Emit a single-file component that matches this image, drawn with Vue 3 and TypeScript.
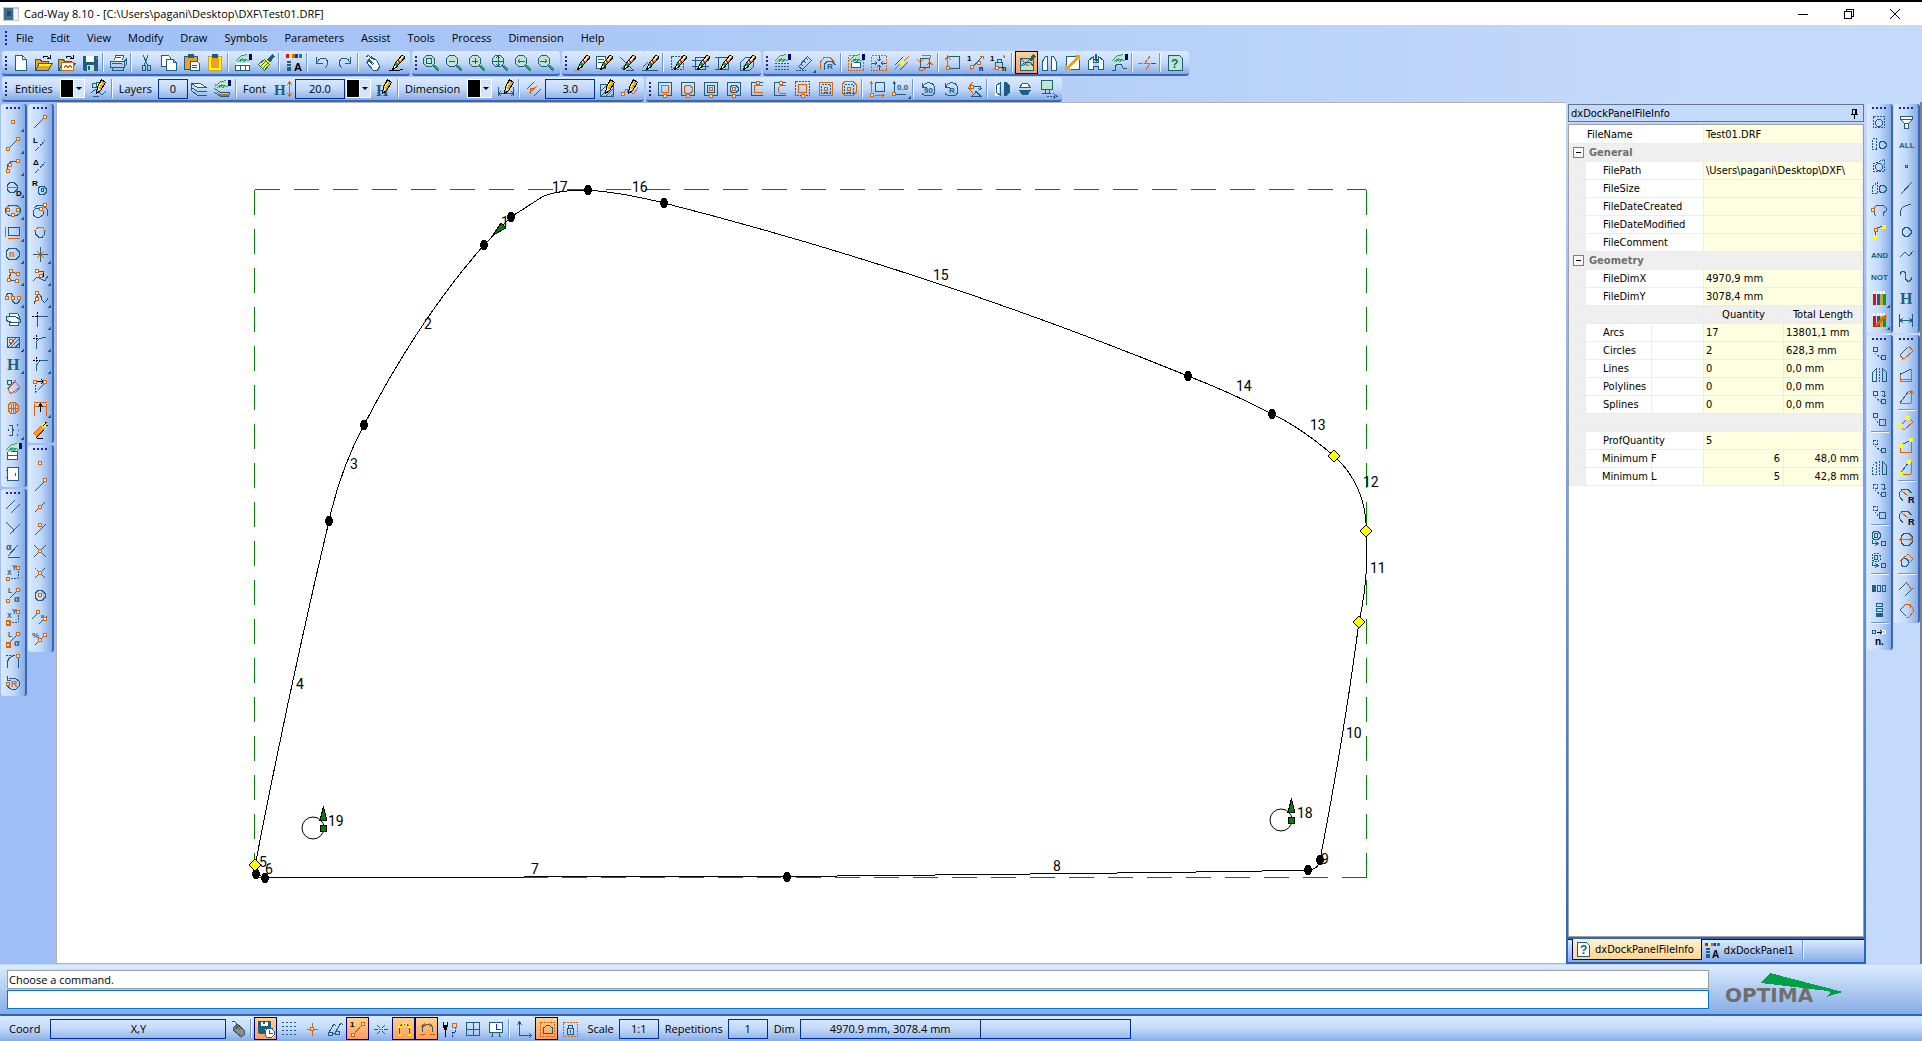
<script setup lang="ts">
import { h, ref } from 'vue'
import type { FunctionalComponent } from 'vue'

/*
 * Icons are written as short part lists on a 20 x 20 grid, parts split by ";".
 *   t M..   stroke in a palette colour      T M..   fill in that colour
 *   dt M..  dotted stroke                   n x y.. square handles
 *   v x y.. yellow handles                  # / $   bold sans / bold serif text: colour x y size text
 */
const palette: Record<string, string> = {
  t: '#1c5f80', o: '#e06200', k: '#000000', r: '#e01010', g: '#00a020', y: '#ffff00', w: '#ffffff',
  s: '#8c8c8c', b: '#00007c', a: '#f0a020', m: '#bfe6cc', l: '#2f9c7c', u: '#1028ff', e: '#d0a040'
}

const Glyph: FunctionalComponent<{ art: string }> = (props) =>
  h('svg', { width: 20, height: 20, viewBox: '0 0 20 20', 'aria-hidden': 'true' },
    props.art.split(';').map((part) => {
      const [code, ...rest] = part.trim().split(' ')
      if (code[0] === '#' || code[0] === '$') {
        return h('text', {
          x: rest[0], y: rest[1], 'font-size': rest[2], 'font-weight': 700, fill: palette[code[1]],
          'font-family': code[0] === '$' ? '"Liberation Serif", serif' : '"Liberation Sans", sans-serif'
        }, rest[3])
      }
      if (code === 'n' || code === 'v') {
        let d = ''
        for (let i = 0; i < rest.length; i += 2) d += `M${+rest[i] - 1.5} ${+rest[i + 1] - 1.5}h3v3h-3z`
        return code === 'n'
          ? h('path', { d, fill: '#fff4e4', stroke: palette.o })
          : h('path', { d, fill: palette.y, stroke: palette.y })
      }
      const dotted = code.length === 2
      const ink = dotted ? code[1] : code
      const filled = ink === ink.toUpperCase()
      const color = palette[ink.toLowerCase()]
      return h('path', {
        d: rest.join(' '), fill: filled ? color : 'none', stroke: filled ? 'none' : color,
        'stroke-dasharray': dotted ? '2 1' : undefined
      })
    }))
Glyph.props = ['art']

interface Tool { label: string; art: string; on?: boolean }
type Item = Tool | null
const tool = (label: string, art: string, on = false): Tool => ({ label, art, on })

const ToolKey: FunctionalComponent<{ item: Item }> = (props) =>
  props.item
    ? h('button', { type: 'button', class: ['key', { on: props.item.on }], 'aria-label': props.item.label }, [h(Glyph, { art: props.item.art })])
    : h('span', { class: 'sep' })
ToolKey.props = ['item']

const MORE = ';T M21 16v4h-4z'
const BRUSH = ';A M15 2h3v3l-7 8-3 3v-5z;k M15 2.500h2M18.500 3v2l-8 9-4 3M15.500 2.500l-7 9-2 5.500;W M15 4l1-1 1 1-6 7-1-1z;R M12 7l2 2-1 1-2-2z;G M10 9l2 2-2 2-1-2z;W M8 15l1-3 1 2z'
const PENCIL = ';A M13 1l4 3-5 7-3 3 1-6z;k M13.500 .5l4 3-5 8-4 3 1-6z;Y M13 3l1 1-3 5-1-1z;W M10 9l2 1-2 2z'
const HAND = ';M M4 5l5-3h7v6l-4 1-8 1z;l M3 8l5-5 6-1.500M5 9l5-4M7 9l4-3 5 1.500M10 9l3-2;B M16 1h3v6h-3z'
const LENS = 'M M6 3h5l2 2v5l-2 3H6l-3-3V6z;t M5.500 2.500h5l3 3v5l-3 3h-5l-3-3v-5z;L M12 12l2 0 4 4v2h-2l-4-4z;t M12 13l5 5'
const FOLDER = 'A M2 7h5l2 2h6v2h4l-4 7H2z;Y M5 11h12l-1 2H4z;t M1.500 17.500v-11h5l1 2h7v2M2 17.500l3-7h13l-4 7z;k M9 4.500q3-3 6 0M16 2v3h-3'

const fileTools: Item[] = [
  tool('New', 'W M5 2h7l4 4v12H5z;t M4.500 2.500h7l4 4v11h-11zM11.500 2.500v4h4'),
  tool('Open', FOLDER),
  tool('Import', FOLDER + ';W M4 9h13v9H4z;o M4.500 9.500h12v8h-12zM7 15l2-3 2 3 2-3 2 3'),
  tool('Save', 'T M3 3h15v15H4l-1-1z;W M6 3h8v6H6z;M M7 12h7v6H7z;T M8 13h2v4h-2z;S M16 4h1v2h-1z'),
  null,
  tool('Print', 'W M6 2h9v6H6z;t M6.500 7.500l1-5h8l-1 5M2.500 8.500h14v6h-14zM4.500 14.500v3h11v-3M4 10.500h10;t M16.500 8l2-2v5l-2 3M8 4.500h5;E M13 11h2v1h-2z'),
  null,
  tool('Cut', 't M7 2l5 11M12 2L8 13M6.500 12.500h3v5h-3zM11.500 12.500h3v5h-3z'),
  tool('Copy', 'W M2 2h8l2 2v9H2z;t M2.500 2.500h7l2 2v9h-9z;W M8 7h8l2 2v9H8z;t M7.500 6.500h7l3 3v8h-10zM14.500 6.500v3h3'),
  tool('Paste', 'A M3 3h13v14H3z;t M2.500 3.500h13v13h-13z;T M6 1h6v4H6z;W M9 8h9v10H9z;t M8.500 8.500h7l2 2v7h-9zM10 12.500h5M10 14.500h5'),
  tool('Clipboard', 'Y M4 4h12v13H4z;e M3.500 3.500h13v14h-13z;A M6 5h8v10H6z;T M7 1h6v4H7z'),
  null,
  tool('Entity properties', 'W M3 10h14v8H3z;t M2.500 12.500h14v5h-14zM7 13v4M12 13v4' + HAND),
  tool('Match format', 'Y M3 11l6-5 5 5-6 6z;t M2.500 11.500l6-5 5 5-5 6zM4 14l6-6M6 16l6-6;T M11 7l5-6 3 2-5 7z'),
  null,
  tool('Layers by colour', 'R M2 1h3v4H2z;Y M5 1h3v4H5z;O M8 1h3v4H8z;U M11 1h3v4h-3z;G M15 1h3v4h-3z;T M3 8h4v2H3zM3 11h4v2H3zM3 14h4v4H3z;#k 10 18 11 A'),
  null,
  tool('Undo', 't M4.500 4v6h6M5 9q4-6 9-3 4 4-1 9'),
  tool('Redo', 't M15.500 4v6h-6M15 9q-4-6-9-3-4 4 1 9'),
  null,
  tool('Pan', 'W M4 3l7 2 5 6v5l-4 2-4-3-5-5 2-2z;t M3.500 3.500l2-1 6 5M5 6l6 5M3.500 9.500l3-1 4 4M8.500 3.500l6 5 2 5-2 4h-4l-7-8z'),
  tool('Redraw', 'k M3 17.500h8l6-1' + BRUSH)
]
const zoomTools: Item[] = [
  tool('Zoom window', LENS + ';t M5.500 5.500h5v5h-5z'),
  tool('Zoom out', LENS + ';t M5 8.500h6'),
  tool('Zoom in', LENS + ';t M5 8.500h6M8.500 5v6'),
  tool('Zoom all', LENS + ';t M3 8.500h10M8.500 3v10M6 5l2-2 2 2M6 11l2 2 2-2'),
  tool('Zoom previous', LENS + ';t M5 8.500h7M7 6L5 8l2 2'),
  tool('Zoom next', LENS + ';t M4 8.500h7M9 6l2 2-2 2')
]
const eraseTools: Item[] = [
  tool('Erase entity', 's M3 17.500h8' + BRUSH),
  tool('Erase list', 'W M3 3h9v12H3z;t M2.500 3.500h9v12h-9zM4 6.500h6M4 9.500h5' + BRUSH),
  tool('Erase crossing', 't M3 4l13 13M9 17h8M4 16l4-4' + BRUSH),
  tool('Erase segment', 't M2 17.500h16M3 14l5-5' + BRUSH),
  null,
  tool('Erase inside', 'dt M3.500 3.500h12v13h-12z;t M4 17L15 6' + BRUSH),
  tool('Trim inside', 't M4.500 4.500h10v12h-10zM1 7.500h17M1 13.500h17' + BRUSH),
  tool('Trim window', 't M4.500 4.500h10v12h-10zM1 4.500h17M1 16.500h6' + BRUSH),
  tool('Erase profile', 't M3.500 9.500l5-5h6l2 3v6l-4 4h-9zM6 14l7-7' + BRUSH)
]
const assistTools: Item[] = [
  tool('Grid properties', 'dt M3 10.500h14M3 13.500h14M3 16.500h14' + HAND),
  tool('Measure', 't M3.500 13.500l9-10 4 4-9 9zM6 11l2 2M9 8l2 2M11 5l2 2;dt M1 17h10' + MORE),
  tool('Radius', 'o M2.500 16V9l4-5h5l5 5;t M6.500 17v-6l3-3h4l4 4;#t 9 16 8 R'),
  null,
  tool('Window selection', 'do M2.500 2.500h15v15h-15z;W M5 9h10v6H5z;t M5.500 9.500h9v5h-9z' + HAND),
  tool('Fit selection', 'do M2.500 2.500h15v15h-15z;t M10 3v5M10 17v-5M3 10h5M17 10h-5M8 6l2 2 2-2M8 14l2-2 2 2M6 8l2 2-2 2M14 8l-2 2 2 2'),
  tool('Split', 't M3 12l8-8M8 17l8-8;v 10 10;o M2 17l6-6M12 8l5-5'),
  tool('Rotate order', 't M5.500 5.500h9v9h-9z;o M2 6l3.500 3.500L9 6M7 2h8v3M11 15l-3 2H4v-3M12 12l2.500-3 3 3'),
  null,
  tool('Start point', 't M4.500 3.500h12v12h-12z;o M2 7l2.500-4L8 7M4.500 4v9;n 5 15'),
  tool('Number order', 't M8 12L17 3;o M4 17l10-10M14 3h3v3;n 6 14 13 10;#k 1 8 8 1;#k 13 18 7 n'),
  tool('Number lock', 't M6.500 9.500h7v5h-7zM8 9V6h4v3;o M14 2l2 3M4 17l4-3;n 8 15;#k 1 8 8 1;#k 13 18 7 n'),
  null,
  tool('Fill drawing', 't M3.500 5.500h13v12h-13zM4 6l8 8M5 14l8-8;T M12 7l4-6 3 2-5 6z;M M4 13h12v4H4z;t M3.500 13.500l4-4h6l3 4v4h-13z', true),
  tool('Mirror view', 'W M3 8l4-5v14H3zM16 8l-4-5v14h4z;t M2.500 8.500l3-5h2v14h-5zM16.500 8.500l-3-5h-2v14h5z'),
  tool('Diagonal', 'W M4 4h12v12H4z;t M3.500 3.500h13v13h-13z;A M11 2h6v6l-2-2-9 9 2 2H2v-6l2 2 9-9z;W M5 5h6l-6 6zM15 9v6H9z'),
  tool('Clamp', 'W M3 7l4-4v14H3zM17 7l-4-4v14h4z;t M2.500 16.500v-9l5-4v6h5v-6l5 4v9h-5v-3h-5v3z;T M9 1h2v5h2l-3 3-3-3h2z'),
  tool('Profile properties', 't M3 17h3v-4l3-2h3l2 4h4' + HAND),
  null,
  tool('Break', 'o M13 3l-5 7h5l-4 7M1 10.500h5;t M14 10.500h5'),
  null,
  tool('Help', 'M M4 2h11l2 2v14H4z;t M3.500 2.500h11l3 3v12h-14z;#t 6 15 12 ?')
]

const penStyle = tool('Line style', 't M4 4h4v4H4zM8 4l9-2M3 14q5-6 8-1t7-1M5 17h6' + PENCIL)
const layerTools: Item[] = [
  tool('Layers', 'W M3 4h9l6 4H8z;t M2.500 4.500h9l6 4h-9zM2.500 8.500l6 4h9M2.500 11.500l6 5h9M2.500 4v8'),
  tool('Layer properties', 't M2.500 5.500h9M2.500 9.500l6 4h9M2.500 13.500l6 4h8l1-3;O M3 12l6 3h7v2H9z' + HAND)
]
const fontHeight = '$t 1 16 15 H;o M16.500 3v14M14 6l2.500-3L19 6M14 14l2.500 3 2.500-3'
const fontStyle = tool('Font style', '$t 2 17 16 H' + PENCIL)
const dimStyle = tool('Dimension style', 't M2.500 8v9M17.500 8v9M3 14.500h14M5 12l-2 2.500L5 17M15 12l2 2.500-2 2.500' + PENCIL)
const offsetTool = tool('Offset', 't M3 10l7-7M10 17l7-7;o M6 15V9h5M5 14l8-7')
const hatchTools: Item[] = [
  tool('Hatch style', 't M3.500 5.500h13v12h-13zM4 12l6-6M4 17L15 6M9 17l7-7M14 17l2-2' + PENCIL),
  tool('Curve style', 'o M4 15q1-7 5-3t6 1 3-5;n 3 15 9 12' + PENCIL)
]

const processTools: Item[] = [
  tool('Outer square', 't M3.500 3.500h13v13h-13z;o M6.500 6.500h7v7h-7z;n 10 17'),
  tool('Outer circle', 't M3.500 3.500h13v13h-13z;o M8 6.500h4l2 2v4l-2 2H8l-2-2v-4z;n 10 17'),
  tool('Inner square', 't M3.500 3.500h13v13h-13zM6.500 6.500h7v7h-7z;o M8.500 8.500h3v3h-3z;n 10 17'),
  tool('Inner circle', 't M3.500 3.500h13v13h-13zM8 6.500h4l2 2v3l-2 2H8l-2-2v-3z;o M8.500 8.500h3v3h-3z;n 10 17'),
  tool('Open square', 't M16 3.500H4.500v13H16;o M16 6.500H7.500v7H16;n 11 4'),
  tool('Open circle', 't M16 3.500H4.500v13H16;o M16 6.500h-5l-3 2v4l3 2h5;n 11 4'),
  tool('Pocket', 'dt M2.500 2.500h14v14h-14z;o M5.500 5.500h8v8h-8z;n 10 17'),
  tool('Pocket square', 'o M3.500 3.500h13v13h-13z;dt M5.500 5.500h9v9h-9z;o M8.500 8.500h3v3h-3z;t M8 13.500h4'),
  tool('Pocket circle', 'o M6 2.500h8l3 3v8l-3 3H6l-3-3v-8z;dt M5.500 5.500h9v9h-9z;o M8.500 8.500h3v3h-3z;t M8 13.500h4'),
  null,
  tool('Box size', 't M8.500 3.500h9v9h-9z;o M4.500 3v10M3 5l1.500-2L6 5M8 16.500h9M15 15l2 1.500-2 1.500;n 5 16'),
  tool('Origin', 't M4.500 15V3M3 5l1.500-2L6 5M6 15.500h10;n 4 15;#t 7 11 8 0.0' + MORE),
  null,
  tool('Rotate 90', 't M4.500 4v4h4M5 8q2-5 7-4t5 7-6 6-7-3;#t 6 14 8 90'),
  tool('Rotate R', 't M4.500 4v4h4M5 8q2-5 7-4t5 7-6 6-7-3;#t 8 14 8 R'),
  tool('Flip', 't M4 9h4M10 7h6v4M14 9l2 2 2-2M8 17.500l4-5 5 5z;o M4 9l5-6M4 9l5 5;n 8 8'),
  null,
  tool('Mirror horizontal', 'W M3 8l4-5v14H3z;t M8.500 3.500l-4 3v7l4 3z;T M12 3h3l3 4v6l-3 4h-3z'),
  tool('Mirror vertical', 'W M5 8l3-4h4l3 4z;t M4.500 8.500l3-4h5l3 4z;T M4 11h12l-3 5H7z'),
  tool('Simulate', 'M M4 3h10v8H4z;t M3.500 1.500h11v9h-11zM7 11v3M4 14.500h9M11 11v3;dt M9 17.500h8;t M15 14l4 3.500-4 2')
]

const drawTools: Item[] = [
  tool('Point', 'n 10 10' + MORE),
  tool('Line', 't M5 15L15 5;n 5 15 15 5' + MORE),
  tool('Arc', 't M4.500 15v-6l3-3 8-1.500;n 5 15 7 9 15 5' + MORE),
  tool('Circle', 't M7 4.500h4l3 3v4l-3 3H7l-3-3v-4z;o M4 9.500h10;#k 13 18 8 D' + MORE),
  tool('Ellipse', 't M6 5.500h8l3.500 3v4l-3.500 3H6l-3.500-3v-4z;n 5 10 15 10 10 15' + MORE),
  tool('Rectangle', 'o M2.500 5v10M5 16.500h12;t M5.500 5.500h11v8h-11z' + MORE),
  tool('Polygon', 't M6 4.500h7l3 3v5l-3 3H6l-3-3v-5z;#o 6 13 9 n' + MORE),
  tool('Polyline', 't M8 5l6 3M8 5L6 14h8;n 8 5 15 8 6 14 14 15' + MORE),
  tool('Spline', 't M3.500 10V7l2-2h2l2 2v6l2 2h3l2-2v-3;n 4 10 10 10 16 10' + MORE),
  tool('Merge', 'W M6 4h9v12H6z;t M6.500 6v-2.500h8l2 3v3M4 6.500h8l5 3v3H9l-6-2v-3zM6.500 12v3.500h9v-3'),
  tool('Hatch', 't M4.500 5.500h12v10h-12zM8 15l8-8M12 15l4-4M5 15l8-9M13 15l3-3;n 8 9' + MORE),
  tool('Text', '$t 4 16 16 H' + MORE),
  tool('Dimension', 't M4 4h4v4H4zM5 13l8-9;o M4.500 12.500L12 6l5 5-9 7zM4 8l3 3M12 17l5-5'),
  tool('Drill pattern', 'o M8 4.500h4l3 3v5l-3 3H8l-3-3v-5zM10 5v10M5 10h10M8 6v8M12 6v8'),
  tool('Markers', 't M6 5h3v4l2 1-2 1v4H6;t M14 4v2M14 14v2M5 9v2M15 10h1' + MORE),
  tool('Block', 'W M4 10h11v8H4z;t M4.500 9.500h10v8h-10zM5 13.500h9' + HAND),
  tool('Panel', 'W M5 4h10v12H5z;t M4.500 3.500h11v13h-11zM3 6.500h2M3 13.500h2M12.500 9v3')
]
const modifyTools: Item[] = [
  tool('Parallel', 't M3 12l9-9M8 16l9-9'),
  tool('Perpendicular', 't M3 3l8 8M7 15L17 5M11 11l-1 2'),
  tool('Angle line', 't M5 16.500h12M5 15L15 4;#t 3 9 9 α'),
  tool('Relative XY', 'dt M5 15.500h10M15.500 5v10;n 5 16 15 5;#t 4 12 7 X;#t 9 7 7 Y'),
  tool('Relative polar', 'dt M5 15L15 5;n 5 16 15 5;#t 5 8 7 L;#t 11 17 9 α'),
  tool('Absolute XY', 'dt M6 15.500h9M15.500 5v10;o M3 13h4v5H3z;n 5 16 15 5;#t 4 11 7 X;#t 9 7 7 Y'),
  tool('Absolute polar', 'dt M5 15L15 5;o M3 13h4v5H3z;n 5 16 15 5;#t 5 8 7 L;#t 11 17 9 α'),
  tool('Tangent arc', 'dt M3 4.500h7;t M4.500 17v-6q1-6 8-6.500M15.500 3v14;n 15 5'),
  tool('Radius arc', 't M6 5h6l4 3v5l-3 3H8l-4-3M4 3v4h4;o M3 9h3v3H3z;#o 8 14 9 R')
]
const lineTools: Item[] = [
  tool('Line end', 't M4 16L15 5;n 15 5'),
  tool('Line length', 't M5 17l3-3;dt M8 14l8-9;#k 3 9 8 L'),
  tool('Line angle', 't M5 17l3-3;dt M8 14l8-9;#k 3 9 8 Δ'),
  tool('Circle radius', 't M10 8.500h4l2 2v4l-2 2h-4l-2-2v-4zM11.500 10.500h2v3h-2z;#k 2 8 8 R'),
  tool('Tangent circle', 't M4 8l4-3h4l5 4v7M6 8h4l3 3v4l-3 2H6l-3-2v-4z;n 11 9 15 5'),
  tool('Circle points', 't M5.500 8v4l3 3h4l2-3V8;o M6 7l3-2h3l2 2M4 8h2M14 8h2'),
  tool('Cross point', 't M10.500 3v15M3 10.500h15;o M7 7l7 7M14 7l-7 7' + MORE),
  tool('Move node', 't M3 15l4-4 8 4 3-5M7 5h6v4;n 7 5 11 10;k M13 7v4' + MORE),
  tool('Edit spline', 't M4 16l4-10q3 0 4 6 3 5 6-2;n 7 5 7 11' + MORE),
  tool('Extend', 't M7.500 7v10M8 6.500h10;dk M2 6.500h6M7.500 2v5' + MORE),
  tool('Fillet', 'dk M3 6.500h9M6.500 3v5;t M6.500 17V10q1-4 10-4.500' + MORE),
  tool('Chamfer', 'dk M3 6.500h9M6.500 3v5;t M6.500 17v-6l4-4.500h7' + MORE),
  tool('Stretch', 'dt M5.500 6v11M6 16l9-9;k M6 5.500h8M11 3l3 2.500L11 8;n 5 6 15 6'),
  tool('Resize', 'o M4 4.500h13M4 8.500h13M4.500 6v12M16.500 6v12;k M10.500 14V6M8 9l2.500-3L13 9' + MORE),
  tool('Explode', 'A M3 14l8-8 3 3-8 8z;o M3 14l8-8M6 17l8-8;k M6 18l8-8M7 18h6;Y M12 5l2-3 3 3-2 3z;k M15 2v2M18 5h-2M13 6l4-4')
]
const snapTools: Item[] = [
  tool('Snap point', 'n 10 10'),
  tool('Snap end', 't M5 16l9-9;n 15 5'),
  tool('Snap middle', 't M5 15L15 5;n 10 10'),
  tool('Snap nearest', 't M5 16L16 5;n 10 6'),
  tool('Snap intersection', 't M4 4l12 12M4 16L16 4;n 10 10'),
  tool('Snap virtual', 't M5 15L15 5;dt M5 5l10 10;n 10 10'),
  tool('Snap centre', 't M8 5.500h4l3 3v4l-3 3H8l-3-3v-4z;n 10 10'),
  tool('Snap between', 't M2 12l8-8M9 17l8-8;O M11 8h3v3h-3z;n 8 5 15 12'),
  tool('Snap percent', 't M5 16l9-9;n 15 6 10 11;#t 2 9 8 %')
]

const selectTools: Item[] = [
  tool('Select window', 'dt M4.500 4.500h11v11h-11z;t M8.500 7.500h3l2 2v3l-2 2h-3l-2-2v-3z'),
  tool('Select outside', 'dt M3.500 4.500h4v11h-4z;t M12 7.500h3l2 2v3l-2 2h-3l-2-2v-3z'),
  tool('Select polygon', 'dt M4.500 7.500l11-4v12h-11z;t M8.500 7.500h3l2 2v3l-2 2h-3l-2-2v-3z'),
  tool('Select not polygon', 'dt M3.500 8.500l5-4v11h-5z;t M12 7.500h3l2 2v3l-2 2h-3l-2-2v-3z'),
  tool('Select profile', 't M7 16l-2-2V8l3-3h6l3 3v3l-3 2v3;n 4 10'),
  tool('Select chain', 't M6 15V9q2-5 9-4;n 7 8;v 15 5 6 15'),
  tool('And', '#t 2 14 8 AND'),
  tool('Not', '#t 2 14 8 NOT'),
  tool('By colour', 'R M4 6h3v11H4z;T M8 6h3v11H8z;E M11 6h3v11h-3z;G M14 6h3v11h-3z;W M4 3h2v3H4zM8 3h2v3H8zM11 3h2v3h-2zM14 3h2v3h-2z' + MORE),
  tool('Colour filter', 'R M4 6h3v11H4z;T M8 6h3v11H8z;E M11 6h3v11h-3z;G M14 6h3v11h-3z;W M4 3h2v3H4zM8 3h2v3H8zM11 3h2v3h-2zM14 3h2v3h-2z;O M6 14l10-9 2 2-11 10z' + MORE)
]
const filterTools: Item[] = [
  tool('Filter', 'W M5 5h11v3l-4 4v5h-2v-5L5 8z;t M4.500 4.500h12v3l-4 4v5h-4v-5l-4-4zM5 7.500h11M9 11.500h4'),
  tool('All', '#t 3 14 8 ALL'),
  tool('Points', 't M9.500 9.500h2v2h-2z'),
  tool('Lines', 't M5 16L16 4'),
  tool('Arcs', 't M4.500 16v-5q1-6 11-6.500'),
  tool('Circles', 't M9 5.500h3l3 3v3l-3 3H9l-3-3v-3z'),
  tool('Polylines', 't M4 13l5-5 4 4 4-5'),
  tool('Splines', 't M4.500 9V7l2-2h1l2 2v6l2 2h2l2-2v-2'),
  tool('Texts', '$t 4 16 16 H'),
  tool('Dimensions', 't M3.500 4v13M16.500 4v13M4 10.500h12M7 8l-3 2.500L7 13M13 8l3 2.500-3 2.500')
]
const copyTools: Item[] = [
  tool('Move', 't M4.500 4.500h4v4h-4zM12.500 12.500h4v4h-4z;dt M6 10l6 5'),
  tool('Mirror', 't M3.500 16.500v-9l4-4v13zM17.500 16.500v-9l-4-4v13z;dt M10.500 3v14'),
  tool('Rotate', 't M4.500 4.500h4v4h-4zM12.500 12.500h4v4h-4zM12 4h3v6M13 8l2 2 2-2;dt M6 10l6 5'),
  tool('Scale', 't M4.500 4.500h4v4h-4zM10.500 10.500h6v6h-6z;dt M6 10l4 5'),
  null,
  tool('Copy move', 'dt M4.500 4.500h4v4h-4z;t M12.500 12.500h4v4h-4z;dt M6 10l6 5'),
  tool('Copy mirror', 'dt M3.500 16.500v-9l4-4v13zM10.500 3v14;t M17.500 16.500v-9l-4-4v13z'),
  tool('Copy rotate', 'dt M4.500 4.500h4v4h-4zM6 10l6 5;t M12.500 12.500h4v4h-4zM12 4h3v6M13 8l2 2 2-2'),
  tool('Copy scale', 'dt M4.500 4.500h4v4h-4zM6 10l4 5;t M10.500 10.500h6v6h-6z'),
  null,
  tool('Offset copy', 't M5 2.500h4l2 2v4l-2 2H5l-2-2v-4zM5.500 4.500h3v4h-3zM12.500 12.500h4v4h-4zM3 11v3h5M6 12l3 2.500L6 17'),
  tool('Offset array', 'dt M5 2.500h4l2 2v4l-2 2H5l-2-2v-4z;t M5.500 4.500h3v4h-3zM12.500 12.500h4v4h-4zM3 11v3h5M6 12l3 2.500L6 17'),
  null,
  tool('Array horizontal', 'T M3 7h4v7H3z;t M8.500 7.500h3v6h-3zM13.500 7.500h3v6h-3z'),
  tool('Array vertical', 't M7.500 3.500h6v3h-6zM7.500 8.500h6v3h-6z;T M7 13h7v4H7z'),
  null,
  tool('Repeat', 't M3.500 3.500h3v3h-3z;k M8 5h4M11 3l2 2-2 2;w M13.500 3.500h3v3h-3z;#k 6 18 10 n.')
]
const measureTools: Item[] = [
  tool('Measure length', 't M4 12l8-8;o M4 12l4 4 9-8-4-4M4 12l3 5M13 3l3 4'),
  tool('Measure box', 't M4.500 11V9l11-5;o M4.500 10v6h11V4M5 14h11'),
  tool('Measure height', 't M4 16L13 4;o M4 16.500h11M15.500 4v12M12 4.500h4M13 7l2.500-3L18 7'),
  null,
  tool('Length by points', 't M4 12l8-8;o M4 12l4 4 9-8-4-4;v 4 12 12 4'),
  tool('Box by points', 't M4.500 11V9l11-5;o M4.500 10v6h11V4;v 5 10 15 4'),
  tool('Height by points', 't M4 16L13 4;o M4 16.500h11M15.500 4v12;v 5 16 13 4'),
  null,
  tool('Measure radius', 't M3.500 12V8l3-4h5l4 4M4 12l3 4;o M6 6l6 5;#k 12 18 9 R'),
  tool('Radius by points', 't M3.500 12V8l3-4h5l4 4M4 12l3 4;o M6 6l6 5;#k 12 18 9 R'),
  tool('Measure diameter', 't M8 4.500h5l3 3v6l-3 3H8l-3-3v-6z;o M3 10.500h14M6 9l-2 1.500L6 12M14 9l2 1.500-2 1.500'),
  tool('Circle distance', 't M7 7.500h3l2 2v4l-2 2H7l-2-2v-4z;o M4 10l8-7 5 5-8 8'),
  null,
  tool('Measure distance', 't M3 12l8-8M9 18l8-8;o M11 5l4 6'),
  tool('Measure angle', 't M10 4l-6 6 6 6;o M10 4h4l3 5v3l-4 5h-3M13 4l2 4')
]

const statusTools: Item[] = [
  tool('Autosave', 'W M3 3h9v9H3z;T M2 2h13v8h-4l-2 5H3l-1-1z;W M5 3h7v4H5z;T M7 3h2v2H7z;W M10 9h7l2 3v4l-3 3h-4l-3-3v-4z;t M11 9.500h5l2.500 3v3l-3 3h-4l-2.500-3v-3zM13.500 11v3h3', true),
  tool('Grid', 'T M3 3h2v1H3zM7 3h2v1H7zM11 3h2v1h-2zM15 3h2v1h-2zM3 7h2v1H3zM7 7h2v1H7zM11 7h2v1h-2zM15 7h2v1h-2zM3 11h2v1H3zM7 11h2v1H7zM11 11h2v1h-2zM15 11h2v1h-2zM3 15h2v1H3zM7 15h2v1H7zM11 15h2v1h-2zM15 15h2v1h-2z'),
  tool('Cross cursor', 'o M10.500 4v13M5 10.500h11;n 10 10'),
  tool('View options', 't M3.500 13.500h4v3h-4zM10.500 12.500h4v3h-4zM4 13L9 5l2 2M11 12l5-8 2 2M8 14h3'),
  tool('Numbers', 'o M5 16L15 5;n 5 16 15 5;#k 2 8 8 1', true),
  tool('Intersection', 't M3 10.500h4M13 10.500h4M6 6l3 3M14 6l-3 3M6 15l3-3M14 15l-3-3;o M8 10.500h4'),
  tool('Start markers', 't M5.500 16V8l3-3h4l3 3v8;Y M4 15h3v2H4zM4 7h3v2H4zM14 7h3v2h-3zM14 15h3v2h-3zM8 4h2v2H8zM11 4h2v2h-2z', true),
  tool('End markers', 't M5.500 13V8l3-3h4l3 3v5;o M3 15h5M13 15h5M4 8l4-4M12 4l4 4M5 5h3v3M15 5h-3v3', true),
  tool('Technology', 'k M5.500 9v9M3.500 3v4M7.500 3v4;K M3 6h5l-1 5H4z;u M13 8q5 2 2 5-5 1-2 5;o M12.500 4.500h4v4h-4z'),
  tool('Windows', 't M3.500 3.500h13v13h-13zM10 3.500v13M3.500 10h13'),
  tool('Display', 'W M4 3h12v10H4z;t M3.500 3.500h13v10h-13zM7 14l-1 3M13 14l1 3M5 17.500h2M13 17.500h2;u M10.500 5v5h4'),
  null,
  tool('Axes', 't M5.500 3v13.500H17M3 6l2.500-3L8 6M15 14l2 2.500-2 2.500'),
  tool('Limits', 'do M3.500 3.500h14v14h-14z;t M6.500 14.500V9l3-2.500h3l3 2.500v5.500z', true),
  tool('Lock limits', 'do M3.500 3.500h14v14h-14z;t M7.500 9.500h6v6h-6zM8.500 9V6.500h4V9M10.500 11v3')
]
const mouse = tool('Mouse', 't M4 3q5-1 4 3;S M5 8l5-3 7 6v5l-4 3-7-6z;t M5.500 8.500l4-3 7 6v4l-3 2-8-6zM6 11l6-5;O M9 9l3-1 1 2-3 1z')

const menus = ['File', 'Edit', 'View', 'Modify', 'Draw', 'Symbols', 'Parameters', 'Assist', 'Tools', 'Process', 'Dimension', 'Help']
const barGroups = [fileTools, zoomTools, eraseTools, assistTools]
const leftDocks = [[drawTools, modifyTools], [lineTools, snapTools]]
const rightDocks = [[selectTools, copyTools], [filterTools, measureTools]]

const command = ref('')
const layer = ref('0')
const fontSize = ref('20.0')
const dimSize = ref('3.0')
const scale = ref('1:1')
const repetitions = ref('1')

const nodes = [[511, 217], [484, 245], [588, 190], [664, 203], [364, 425], [329, 521], [1188, 376], [1272, 414], [1320, 860], [1308, 870], [787, 877], [265, 878], [256, 874]]
const diamonds = [[1334, 456], [1366, 531], [1359, 622], [255, 865]]
const marks: [string, number, number][] = [
  ['1', 501, 227], ['2', 424, 329], ['3', 350, 469], ['4', 296, 689], ['5', 259, 867], ['6', 265, 874], ['7', 531, 874],
  ['8', 1053, 871], ['9', 1321, 864], ['10', 1346, 738], ['11', 1370, 573], ['12', 1363, 487], ['13', 1310, 430],
  ['14', 1236, 391], ['15', 933, 280], ['16', 632, 192], ['17', 552, 192], ['18', 1297, 818], ['19', 328, 826]
]
const holes = [[1281, 820], [313, 828]]

const filePairs = [['FilePath', '\\Users\\pagani\\Desktop\\DXF\\'], ['FileSize', ''], ['FileDateCreated', ''], ['FileDateModified', ''], ['FileComment', '']]
const dimPairs = [['FileDimX', '4970,9 mm'], ['FileDimY', '3078,4 mm']]
const counts = [['Arcs', '17', '13801,1 mm'], ['Circles', '2', '628,3 mm'], ['Lines', '0', '0,0 mm'], ['Polylines', '0', '0,0 mm'], ['Splines', '0', '0,0 mm']]
const minimums = [['Minimum F', '6', '48,0 mm'], ['Minimum L', '5', '42,8 mm']]
</script>

<template>
  <div class="app">
    <header class="title">
      <svg class="logo" width="16" height="14" viewBox="0 0 16 14" aria-hidden="true">
        <rect x="0" y="0" width="16" height="14" fill="#c4c8cc" /><rect x="1" y="1" width="9" height="12" fill="#3a7088" />
        <rect x="4" y="4" width="4" height="5" fill="#2a4090" /><rect x="11" y="2" width="4" height="11" fill="#f4f4f4" />
      </svg>
      <h1>Cad-Way 8.10 - [C:\Users\pagani\Desktop\DXF\Test01.DRF]</h1>
      <div class="win">
        <button type="button" aria-label="Minimize"><svg width="12" height="12" viewBox="0 0 12 12"><path d="M1 6.500h10" /></svg></button>
        <button type="button" aria-label="Restore"><svg width="12" height="12" viewBox="0 0 12 12"><path d="M1.500 3.500h7v7h-7zM3.500 3v-1.500h7v7H9" /></svg></button>
        <button type="button" aria-label="Close"><svg class="soft" width="12" height="12" viewBox="0 0 12 12"><path d="M1 1l10 10M11 1L1 11" /></svg></button>
      </div>
    </header>

    <nav class="menu">
      <span class="grip"></span>
      <button v-for="m in menus" :key="m" type="button">{{ m }}</button>
    </nav>

    <div class="rows">
      <div class="row">
        <div v-for="(group, g) in barGroups" :key="g" class="bar">
          <span class="grip"></span>
          <ToolKey v-for="(item, i) in group" :key="i" :item="item" />
        </div>
      </div>
      <div class="row">
        <div class="bar">
          <span class="grip"></span>
          <label for="entity-color">Entities</label>
          <span class="combo"><select id="entity-color"><option>Black</option></select></span>
          <ToolKey :item="penStyle" /><ToolKey :item="null" />
          <label for="layer">Layers</label>
          <input id="layer" v-model="layer" class="field tiny" type="text">
          <ToolKey v-for="(item, i) in layerTools" :key="i" :item="item" /><ToolKey :item="null" />
          <label for="font-size">Font</label>
          <span class="key"><Glyph :art="fontHeight" /></span>
          <input id="font-size" v-model="fontSize" class="field" type="text">
          <span class="combo"><select aria-label="Font colour"><option>Black</option></select></span>
          <ToolKey :item="fontStyle" /><ToolKey :item="null" />
          <label for="dim-color">Dimension</label>
          <span class="combo"><select id="dim-color"><option>Black</option></select></span>
          <ToolKey :item="dimStyle" /><ToolKey :item="null" /><ToolKey :item="offsetTool" />
          <input v-model="dimSize" class="field" type="text" aria-label="Offset">
          <ToolKey v-for="(item, i) in hatchTools" :key="i" :item="item" />
        </div>
        <div class="bar">
          <span class="grip"></span>
          <ToolKey v-for="(item, i) in processTools" :key="i" :item="item" />
        </div>
      </div>
    </div>

    <main class="work">
      <aside class="docks left">
        <div v-for="(column, c) in leftDocks" :key="c" class="column">
          <div v-for="(group, g) in column" :key="g" class="dock">
            <span class="grip"></span>
            <ToolKey v-for="(item, i) in group" :key="i" :item="item" />
          </div>
        </div>
      </aside>

      <section class="canvas">
        <svg class="sheet" role="img" aria-label="Profile drawing">
          <g transform="translate(-57 -103)">
            <path class="limits" d="M254.500 189.500H1366M254.500 189.500V878M1366.500 878V189M1366.500 877.500H254" />
            <path class="outline" d="M511 217L542 197Q557 190 588 190Q625 193 664 203Q930 271 1188 376Q1232 393 1272 414Q1300 427 1334 456C1354 474 1366 500 1366.500 531V568Q1365 595 1359 622Q1344 736 1320 860Q1319 869 1308 870Q1250 872 787 876.500L265 877.500L256 874L255 866Q289 690 329 521Q340 470 364 425C395 365 433 303 484 245Z" />
            <g v-for="(c, i) in holes" :key="'h' + i">
              <circle class="hole" :cx="c[0]" :cy="c[1]" r="11" />
              <path class="start" :d="`M${c[0] + 7.5} ${c[1] - 2.5}h6v6h-6zM${c[0] + 7} ${c[1] - 7.5}l3.500-14 3.500 14z`" />
            </g>
            <path class="start" d="M493 235l8-12 5 5z" />
            <ellipse v-for="(n, i) in nodes" :key="'n' + i" :cx="n[0]" :cy="n[1]" rx="4" ry="5" />
            <path v-for="(n, i) in diamonds" :key="'d' + i" class="diamond" :d="`M${n[0] - 6} ${n[1]}l6-6 6 6-6 6z`" />
            <text v-for="m in marks" :key="m[0]" :x="m[1]" :y="m[2]">{{ m[0] }}</text>
          </g>
        </svg>
      </section>

      <aside class="info">
        <div class="info-head">
          <span>dxDockPanelFileInfo</span>
          <button type="button" aria-label="Pin panel"><svg width="9" height="11" viewBox="0 0 9 11"><path d="M2.500 6V1.500h4V6M5.500 2v4M1 6.500h7M4.500 7v4" /></svg></button>
        </div>
        <div class="grid">
          <table>
            <colgroup><col class="c-gutter"><col class="c-label"><col class="c-sub"><col class="c-qty"><col></colgroup>
            <tbody>
              <tr><th class="first" colspan="3">FileName</th><td colspan="2">Test01.DRF</td></tr>
              <tr class="group"><th colspan="5"><button type="button" aria-label="Collapse"></button>General</th></tr>
              <tr v-for="p in filePairs" :key="p[0]"><td class="gutter"></td><th colspan="2">{{ p[0] }}</th><td colspan="2">{{ p[1] }}</td></tr>
              <tr class="group"><th colspan="5"><button type="button" aria-label="Collapse"></button>Geometry</th></tr>
              <tr v-for="p in dimPairs" :key="p[0]"><td class="gutter"></td><th colspan="2">{{ p[0] }}</th><td colspan="2">{{ p[1] }}</td></tr>
              <tr class="heads"><td colspan="3"></td><th>Quantity</th><th>Total Length</th></tr>
              <tr v-for="c in counts" :key="c[0]"><td class="gutter"></td><th>{{ c[0] }}</th><th></th><td>{{ c[1] }}</td><td>{{ c[2] }}</td></tr>
              <tr class="heads"><td colspan="5"></td></tr>
              <tr><td class="gutter"></td><th colspan="2">ProfQuantity</th><td colspan="2">5</td></tr>
              <tr v-for="c in minimums" :key="c[0]"><td class="gutter"></td><th class="long">{{ c[0] }}</th><th></th><td class="num">{{ c[1] }}</td><td class="num">{{ c[2] }}</td></tr>
            </tbody>
          </table>
        </div>
        <div class="tabs">
          <button type="button" class="current"><Glyph art="W M4 3h9l3 3v12H4z;t M3.500 3.500h9l3 3v11h-12z;#t 6 15 12 ?" />dxDockPanelFileInfo</button>
          <button type="button"><Glyph art="R M2 2h3v3H2z;Y M5 2h2v3H5z;O M8 2h3v3H8z;U M11 2h2v3h-2z;G M14 2h3v3h-3z;T M3 7h4v2H3zM3 10h4v2H3zM3 13h4v4H3z;#k 9 17 10 A" />dxDockPanel1</button>
          <span class="sep"></span>
        </div>
      </aside>

      <aside class="docks right">
        <div v-for="(column, c) in rightDocks" :key="c" class="column">
          <div v-for="(group, g) in column" :key="g" class="dock">
            <span class="grip"></span>
            <ToolKey v-for="(item, i) in group" :key="i" :item="item" />
          </div>
        </div>
      </aside>
    </main>

    <section class="command">
      <div class="lines">
        <output>Choose a command.</output>
        <input v-model="command" type="text" aria-label="Command" autofocus>
      </div>
      <svg class="brand" width="120" height="34" viewBox="0 0 120 34" role="img" aria-label="Optima">
        <path d="M36 10L45 0L118 19L101 24L105 20L103 18Z" fill="#00a048" />
        <text x="0" y="29">OPTIMA</text>
      </svg>
    </section>

    <footer class="status">
      <span class="word">Coord</span>
      <button type="button" class="field coord">X,Y</button>
      <ToolKey :item="mouse" /><ToolKey :item="null" />
      <ToolKey v-for="(item, i) in statusTools" :key="i" :item="item" />
      <label for="scale">Scale</label>
      <input id="scale" v-model="scale" class="field short" type="text">
      <label for="reps">Repetitions</label>
      <input id="reps" v-model="repetitions" class="field short" type="text">
      <span class="word">Dim</span>
      <output class="field size">4970.9 mm, 3078.4 mm</output>
      <output class="field rest"></output>
    </footer>
  </div>
</template>

<style>
body { margin: 0; }
</style>

<style scoped>
.app { min-height: 100vh; display: flex; flex-direction: column; font: 11px/16px "Open Sans", "Noto Sans", sans-serif; color: #000; background: linear-gradient(90deg, #9ebef5, #c4dafa 90%); }
.app :deep(*) { box-sizing: border-box; }
.app :deep(button) { font: inherit; color: inherit; border: 0; background: none; padding: 0; margin: 0; }
.app :deep(svg) { display: block; flex: none; overflow: visible; shape-rendering: crispEdges; }
.app svg.soft, .hole { shape-rendering: auto; }

.title { height: 25px; display: flex; align-items: center; background: #fff; border-top: 2px solid #000; padding: 0 4px 0 3px; }
.title h1 { font: inherit; margin: 0 0 0 5px; flex: 1; }
.win { display: flex; }
.win button { width: 46px; height: 22px; display: grid; place-items: center; }
.win path, .info-head path { fill: none; stroke: #000; }

.menu { height: 26px; display: flex; align-items: center; gap: 17px; padding-left: 2px; }
.menu .grip { margin-right: -10px; }

.grip { flex: none; width: 7px; height: 18px; background: repeating-linear-gradient(#24248c 0 2px, transparent 2px 4px) 3px 2px / 2px 14px no-repeat; }

.rows { display: flex; flex-direction: column; gap: 1px; padding-left: 2px; }
.row { display: flex; gap: 2px; }
.bar { height: 25px; display: flex; align-items: center; padding-right: 3px; border-radius: 3px; border-bottom: 2px solid #3a66b8; background: linear-gradient(#dcebfe, #c4dafa 50%, #86ace6); }
.bar label { padding: 0 6px 0 4px; }
.bar .grip + label { padding: 0 6px; }
:deep(.key) { flex: none; width: 23px; height: 23px; display: flex; align-items: center; justify-content: center; }
.app :deep(.key.on) { border: 1px solid #00007c; background: linear-gradient(#ffd294, #ff9c5c); }
:deep(.sep) { flex: none; width: 5px; height: 19px; background: linear-gradient(90deg, transparent 1px, #6d97d8 1px 2px, #f4f9ff 2px 3px, transparent 3px); }

.combo { position: relative; flex: none; width: 25px; height: 19px; margin: 0 2px 0 1px; }
.combo select { width: 25px; height: 19px; appearance: none; border: 1px solid #fff; color: transparent; padding: 0; border-radius: 0; background: linear-gradient(90deg, #000 12px, #fff 12px 13px, #d4e4fb 13px); }
.combo::after { content: ""; position: absolute; right: 3px; top: 8px; border: 3px solid transparent; border-top-color: #000; border-bottom: 0; pointer-events: none; }
.field { flex: none; width: 50px; height: 20px; border-radius: 0; background: transparent; font: inherit; color: inherit; text-align: center; padding: 0; margin: 0; outline: 0; }
.app .field { border: 1px solid #002c9c; }
.field.tiny { width: 30px; }

.work { flex: 1; display: flex; align-items: stretch; }
.docks { flex: none; display: flex; gap: 1px; padding-top: 2px; }
.docks.left { width: 56px; padding-left: 1px; background: #9ebef5; }
.docks.right { width: 56px; padding-left: 1px; border-right: 2px solid #7c8088; background: #c4dafa; }
.column { display: flex; flex-direction: column; gap: 2px; width: 26px; }
.dock { display: flex; flex-direction: column; padding-bottom: 2px; border-radius: 3px; border-right: 2px solid #3a66b8; background: linear-gradient(90deg, #dcebfe, #c4dafa 50%, #86ace6); }
.dock .grip { width: 24px; height: 7px; background: repeating-linear-gradient(90deg, #24248c 0 2px, transparent 2px 4px) 5px 3px / 14px 2px no-repeat; }
.dock :deep(.key) { width: 24px; height: 22px; }
.dock :deep(.sep) { width: 18px; height: 5px; margin-left: 4px; background: linear-gradient(transparent 1px, #6d97d8 1px 2px, #f4f9ff 2px 3px, transparent 3px); }

.canvas { flex: 1; min-width: 0; background: #fff; border: 1px solid #b4b4b4; border-width: 1px 0 1px 1px; overflow: hidden; display: flex; }
.sheet { width: 100%; height: 100%; }
.limits { fill: none; stroke: #008000; stroke-dasharray: 25 14; }
.outline, .hole { fill: none; stroke: #000; }
.start { fill: #008000; stroke: #000; }
.diamond { fill: #ff0; stroke: #000; }
.sheet text { font: 400 14px Roboto, sans-serif; }

.info { flex: none; width: 300px; display: flex; flex-direction: column; padding: 2px 2px 0; border-bottom: 2px solid #2a63c4; font: 11px/17px "DejaVu Sans Condensed", "DejaVu Sans", sans-serif; background: linear-gradient(#c4dafa, #6f9ae6 50%, #2a63c4); }
.info-head { height: 18px; display: flex; align-items: center; justify-content: space-between; padding: 0 4px 0 2px; border: 1px solid #66758c; background: #c4dafa; }
.grid { flex: 1; margin-top: 2px; padding-top: 1px; background: #fff; border: 1px solid #a0a0a0; }
table { width: 100%; table-layout: fixed; border-collapse: separate; border-spacing: 0; }
.c-gutter { width: 17px; }
.c-label { width: 66px; }
.c-sub { width: 52px; }
.c-qty { width: 80px; }
th, td { height: 18px; padding: 0 0 0 2px; border-right: 1px solid #ececec; border-bottom: 1px solid #ececec; font-weight: 400; text-align: left; white-space: nowrap; }
td { background: #ffffe1; }
th { padding-left: 17px; }
th.first { padding-left: 18px; }
td.gutter, .heads td, .heads th, .group th { background: #efefef; }
.heads th { padding: 0; text-align: center; }
.group th { padding-left: 4px; font-weight: 700; color: #6e6e6e; }
.app .group button { width: 11px; height: 11px; vertical-align: -1px; border: 1px solid #7c7c7c; margin-right: 5px; background: linear-gradient(#000, #000) center / 5px 1px no-repeat #f8f8f8; }
td.num { text-align: right; padding-right: 3px; }
th.long { padding-left: 16px; }
.tabs { height: 23px; margin-top: 2px; display: flex; align-items: flex-start; padding-left: 4px; border-top: 1px solid #00007c; background: linear-gradient(#dcebfe, #86ace6); }
.app .tabs button { height: 21px; display: flex; align-items: center; gap: 1px; padding: 0 7px 0 1px; }
.app .tabs .current { margin-top: -1px; border: 1px solid #00007c; border-top: 0; background: linear-gradient(#fff4d0, #ffd68e); }

.command { height: 52px; display: flex; align-items: center; padding: 0 77px 0 7px; gap: 16px; border-top: 1px solid #c4dafa; border-bottom: 2px solid #2a63c4; background: linear-gradient(#dcebfe, #86ace6); }
.lines { flex: 1; display: flex; flex-direction: column; gap: 1px; }
.lines output, .lines input { height: 19px; width: 100%; border: 1px solid #9c9c9c; background: #fff; padding: 0 1px; font: inherit; line-height: 17px; outline: 0; border-radius: 0; }
.lines input { border-color: #0078d7; }
.brand text { font: 700 20px "DejaVu Sans", sans-serif; fill: #6e6e6e; }

.status { height: 25px; display: flex; align-items: center; padding-left: 3px; background: linear-gradient(#dcebfe, #c4dafa 50%, #86ace6); }
.status label, .word { padding: 0 5px 0 6px; }
.app .status .coord { width: 176px; margin-left: 5px; }
.status .short { width: 40px; }
.status .size { width: 181px; line-height: 18px; }
.status .rest { width: 151px; margin-left: -1px; }
</style>
